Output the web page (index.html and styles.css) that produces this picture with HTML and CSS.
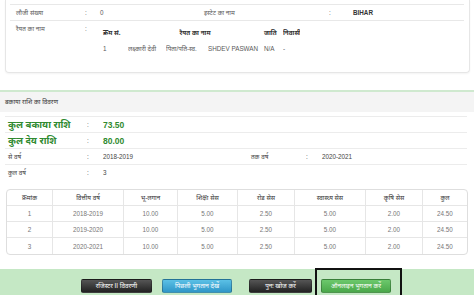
FILE: index.html
```html
<!doctype html>
<html>
<head>
<title>बकाया राशि का विवरण</title>
<meta http-equiv="Content-Type" content="text/html; charset=utf-8" />
<link rel="stylesheet" href="styles.css">
</head>
<body>

<div class="owner-card">
	<div class="info-cut"></div>
	<div class="info-row">
		<span class="lbl">लौजी संख्या</span><span class="sep">:</span><span class="val">0</span>
		<span class="lbl">इस्टेट का नाम</span><span class="sep">:</span><span class="val strong">BIHAR</span>
	</div>
	<div class="info-row info-row-last">
		<span class="lbl">रैयत का नाम</span><span class="sep">:</span>
		<div class="raiyat-wrap">
			<table class="raiyat">
				<colgroup>
					<col class="c1"><col class="c2"><col class="c3"><col class="c4"><col class="c5"><col class="c6">
				</colgroup>
				<tr>
					<th class="first">क्रम सं.</th>
					<th colspan="3" class="mid">रैयत का नाम</th>
					<th class="jati">जाति</th>
					<th>निवासी</th>
				</tr>
				<tr>
					<td class="first">1</td>
					<td>लक्ष्कारी देवी</td>
					<td>पिता/पति-स्व.</td>
					<td>SHDEV PASWAN</td>
					<td class="jati">N/A</td>
					<td>-</td>
				</tr>
			</table>
		</div>
	</div>
</div>

<section class="dues">
	<div class="dues-head">बकाया राशि का विवरण</div>
	<div class="dues-body">
		<div class="sum-row big">
			<span>कुल बकाया राशि</span><span class="sep">:</span><span class="amt">73.50</span>
		</div>
		<div class="sum-row big">
			<span>कुल देय राशि</span><span class="sep">:</span><span class="amt">80.00</span>
		</div>
		<div class="sum-row">
			<span>से वर्ष</span><span class="sep">:</span><span>2018-2019</span>
			<span>तक वर्ष</span><span class="sep">:</span><span>2020-2021</span>
		</div>
		<div class="sum-row">
			<span>कुल वर्ष</span><span class="sep">:</span><span>3</span>
		</div>
	</div>

	<table class="years">
		<colgroup>
			<col style="width:46px"><col style="width:71px"><col style="width:54px"><col style="width:60px">
			<col style="width:57px"><col style="width:71px"><col style="width:57px"><col style="width:44px">
		</colgroup>
		<tr>
			<th>क्रमांक</th><th>वित्तीय वर्ष</th><th>भू-लगान</th><th>शिक्षा सेस</th>
			<th>रोड सेस</th><th>स्वास्थ्य सेस</th><th>कृषि सेस</th><th>कुल</th>
		</tr>
		<tr>
			<td>1</td><td>2018-2019</td><td>10.00</td><td>5.00</td>
			<td>2.50</td><td>5.00</td><td>2.00</td><td>24.50</td>
		</tr>
		<tr>
			<td>2</td><td>2019-2020</td><td>10.00</td><td>5.00</td>
			<td>2.50</td><td>5.00</td><td>2.00</td><td>24.50</td>
		</tr>
		<tr>
			<td>3</td><td>2020-2021</td><td>10.00</td><td>5.00</td>
			<td>2.50</td><td>5.00</td><td>2.00</td><td>24.50</td>
		</tr>
	</table>
</section>

<div class="action-bar">
	<button class="btn btn-dark btn-register">रजिस्टर II विवरणी</button>
	<button class="btn btn-blue btn-history">पिछली भुगतान देखें</button>
	<button class="btn btn-dark btn-search">पुनः खोज करें</button>
	<span class="pay-box">
		<button class="btn btn-green">ऑनलाइन भुगतान करें</button>
	</span>
</div>

</body>
</html>
```

FILE: styles.css
```css
body {
	margin: 0;
	width: 474px;
	height: 295px;
	overflow: hidden;
	font-family: "Liberation Sans", "Noto Sans", sans-serif;
	font-size: 6.3px;
	color: #5a5a5a;
	background: #fff;
}

/* top card with the raiyat details */
.owner-card {
	margin: 0 4px 0 5px;
	height: 73px;
	border: 1px solid #e6e6e6;
	border-top: none;
	border-radius: 0 0 4px 4px;
	box-shadow: 0 1px 2px rgba(0,0,0,0.05);
	box-sizing: border-box;
}

.info-cut {
	height: 4px;
	margin: 0 5px 0 4px;
	border-bottom: 1px solid #e8e8e8;
}

.info-row {
	display: grid;
	grid-template-columns: 69px 15px 104px 125px 24px 1fr;
	align-items: center;
	height: 15px;
	margin: 0 5px 0 4px;
	padding-left: 6px;
	border-bottom: 1px solid #e8e8e8;
	line-height: 9px;
}

.info-row-last {
	align-items: start;
	height: auto;
	border-bottom: none;
	padding-top: 3px;
}

.strong {
	font-weight: bold;
	color: #333;
}

.raiyat-wrap {
	grid-column: 3 / 7;
}

.raiyat {
	border-collapse: collapse;
	table-layout: fixed;
	width: 200px;
	font-size: 6.3px;
}

.raiyat .c1 { width: 28px; }
.raiyat .c2 { width: 38px; }
.raiyat .c3 { width: 42px; }
.raiyat .c4 { width: 54px; }
.raiyat .c5 { width: 21px; }
.raiyat .c6 { width: 17px; }

.raiyat th,
.raiyat td {
	height: 16px;
	padding: 0;
	text-align: left;
	white-space: nowrap;
	overflow: hidden;
}

.raiyat th {
	color: #333;
	font-weight: bold;
}

.raiyat .first {
	padding-left: 3px;
}

.raiyat .mid {
	text-align: center;
}

.raiyat .jati {
	padding-left: 2px;
}

/* dues section */
.dues {
	margin-top: 17px;
	border-top: 2px solid #cfe9cf;
}

.dues-head {
	height: 20px;
	line-height: 20px;
	padding-left: 5px;
	background: #f4f4f4;
	color: #333;
}

.dues-body {
	padding: 4px 7px 0 5px;
}

.sum-row {
	display: grid;
	grid-template-columns: 79px 16px 148px 55px 16px 1fr;
	align-items: center;
	height: 15px;
	padding-left: 3px;
	border-top: 1px solid #ececec;
	color: #444;
}

.sum-row.big {
	color: #2f8a2f;
	font-size: 9.5px;
	font-weight: bold;
}

.sum-row.big .sep {
	font-size: 6.3px;
	font-weight: normal;
	color: #555;
}

.sum-row .amt {
	font-size: 8.5px;
}

.years {
	margin: 9px 0 0 6px;
	width: 460px;
	table-layout: fixed;
	border-collapse: separate;
	border-spacing: 0;
	border: 1px solid #dedede;
	border-radius: 4px;
	font-size: 6.3px;
}

.years th,
.years td {
	height: 15px;
	padding: 0;
	text-align: center;
	border-right: 1px solid #e6e6e6;
	border-bottom: 1px solid #e6e6e6;
}

.years tr th:last-child,
.years tr td:last-child {
	border-right: none;
}

.years tr:last-child td {
	border-bottom: none;
	height: 16px;
}

.years th {
	color: #333;
	font-weight: normal;
}

.years td {
	color: #777;
}

/* bottom action bar */
.action-bar {
	display: flex;
	align-items: flex-start;
	height: 27px;
	margin-top: 14px;
	padding-left: 81px;
	background: #c5e8c5;
}

.btn {
	height: 14px;
	margin-top: 10px;
	padding: 0;
	border: 1px solid rgba(0,0,0,0.25);
	border-radius: 2px;
	color: #fff;
	font-family: "Liberation Sans", "Noto Sans", sans-serif;
	font-size: 6.3px;
	line-height: 12px;
	text-align: center;
}

.btn-dark {
	background: linear-gradient(#555, #222);
}

.btn-blue {
	background: linear-gradient(#5bc0e6, #2f96c8);
}

.btn-green {
	width: 70px;
	margin-top: 9px;
	background: linear-gradient(#6cc86c, #4aa84a);
}

.btn-register { width: 71px; }
.btn-history { width: 70px; margin-left: 10px; }
.btn-search { width: 63px; margin-left: 17px; }

.pay-box {
	display: flex;
	align-items: flex-start;
	margin-left: 3px;
	margin-top: -1px;
	height: 32px;
	padding: 0 9px 0 4px;
	border: 2px solid #111;
	box-sizing: border-box;
}

.pay-box .btn {
	margin-top: 9px;
}
```
